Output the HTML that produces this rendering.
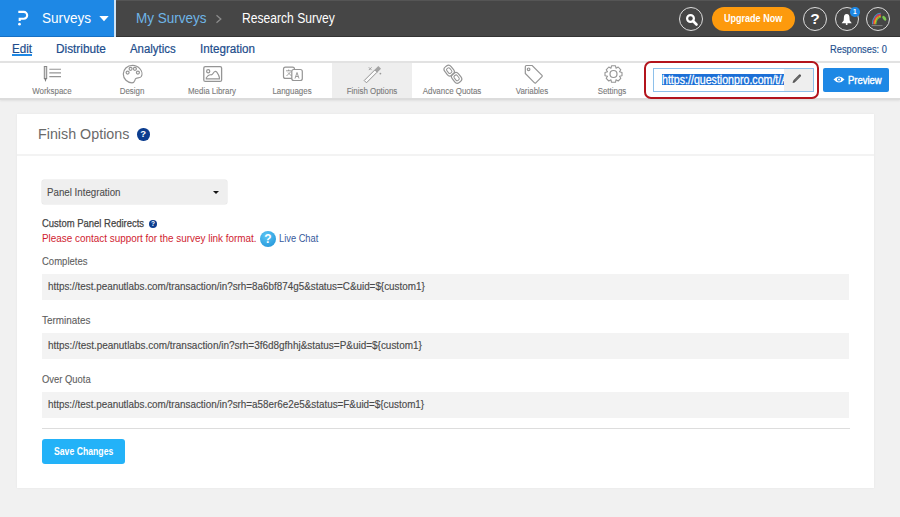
<!DOCTYPE html>
<html><head><meta charset="utf-8">
<style>
*{box-sizing:border-box;margin:0;padding:0}
html,body{width:900px;height:517px;overflow:hidden;background:#f1f1f1;font-family:"Liberation Sans",sans-serif;position:relative}
.abs{position:absolute;white-space:nowrap}
#hdr{position:absolute;left:0;top:0;width:900px;height:37px;background:#464646;border-top:1px solid #555;border-bottom:1px solid #333}
#brand{position:absolute;left:0;top:0;width:114px;height:37px;background:#1e88e5;border-bottom:1px solid #1670c4}
#brandsep{position:absolute;left:114px;top:0;width:2px;height:37px;background:#cfe3f5}
#nav{position:absolute;left:0;top:37px;width:900px;height:25px;background:#fff}
#tb{position:absolute;left:0;top:61px;width:900px;height:39px;background:#fff;border-top:2px solid #e2e2e2;border-bottom:2px solid #dcdcdc;box-shadow:0 1px 2px rgba(0,0,0,0.07)}
.ti{position:absolute;top:0;width:80px;height:35px;text-align:center}
.ti.act{background:#eeeeee}
.ti span{position:absolute;left:0;right:0;top:23px;font-size:8.3px;color:#7a7a7a;text-align:center;transform:scaleX(0.955);-webkit-text-stroke:0.1px #7a7a7a}
.ti svg{position:absolute;left:30px;top:3px}
#card{position:absolute;left:17px;top:114px;width:857px;height:374px;background:#fff;box-shadow:0 0 2px rgba(0,0,0,0.06)}
.lbl{position:absolute;left:42px;font-size:11px;color:#5e5e5e;white-space:nowrap;-webkit-text-stroke:0.1px #5e5e5e}
.sx{transform-origin:0 0}
.nv{top:42px;font-size:12px;color:#214d8c;-webkit-text-stroke:0.2px #214d8c}
.fld{position:absolute;left:42px;width:807px;height:26px;background:#f3f3f3}
.fld span{position:absolute;left:6px;top:6px;font-size:11px;color:#4a4a4a;white-space:nowrap;-webkit-text-stroke:0.15px #4a4a4a}
</style></head><body>
<div id="hdr"></div>
<div id="brand"></div>
<div id="brandsep"></div>
<!-- P logo -->
<svg class="abs" style="left:12px;top:6px" width="24" height="24" viewBox="12 6 24 24">
 <path d="M18.3 11.9 H23.8 A3.4 3.4 0 0 1 23.8 18.7 H19.7 V21" fill="none" stroke="#fff" stroke-width="2.1"/>
 <circle cx="19.5" cy="24.2" r="1.35" fill="#fff"/>
</svg>
<div class="abs" style="left:42px;top:10px;font-size:14px;color:#fff;transform-origin:0 0;transform:scaleX(0.97)">Surveys</div>
<svg class="abs" style="left:99px;top:16px" width="10" height="6"><path d="M0.3 0H9.7L5 5.3Z" fill="#fff"/></svg>
<div class="abs" style="left:136px;top:10px;font-size:14px;color:#6eb5e6;transform-origin:0 0;transform:scaleX(0.965)">My Surveys</div>
<svg class="abs" style="left:215px;top:14px" width="8" height="10"><path d="M1.5 1.3L5.8 5L1.5 8.7" fill="none" stroke="#8c8c8c" stroke-width="1.3"/></svg>
<div class="abs" style="left:242px;top:10px;font-size:14px;color:#fff;transform-origin:0 0;transform:scaleX(0.865)">Research Survey</div>

<!-- header right icons -->
<div class="abs" style="left:679px;top:7px;width:24px;height:24px;border:1.5px solid #ddd;border-radius:50%"></div>
<svg class="abs" style="left:685px;top:12.5px" width="14" height="14" viewBox="0 0 14 14"><circle cx="5.5" cy="5.5" r="3.4" fill="none" stroke="#fff" stroke-width="2.2"/><path d="M8 8L11.5 11.5" stroke="#fff" stroke-width="2.6" stroke-linecap="round"/></svg>
<div class="abs" style="left:712px;top:7px;width:83px;height:24px;background:#fd9a0d;border-radius:12px"></div>
<div class="abs" style="left:724px;top:12px;font-size:10.5px;font-weight:bold;color:#fff;transform-origin:0 0;transform:scaleX(0.86)">Upgrade Now</div>
<div class="abs" style="left:803px;top:7px;width:24px;height:24px;border:1.5px solid #ddd;border-radius:50%"></div>
<div class="abs" style="left:803px;top:10px;width:24px;text-align:center;font-size:15.5px;font-weight:bold;color:#fff">?</div>
<div class="abs" style="left:835px;top:7px;width:24px;height:24px;border:1.5px solid #ddd;border-radius:50%"></div>
<svg class="abs" style="left:836px;top:8px" width="22" height="22" viewBox="836 8 22 22"><path d="M846.7 14 C844.6 14 843.9 15.8 843.9 17.6 L843.7 20.6 L841.6 23.3 H851.8 L849.7 20.6 L849.5 17.6 C849.5 15.8 848.8 14 846.7 14Z" fill="#fff"/><circle cx="846.7" cy="23.9" r="1" fill="#fff"/></svg>
<div class="abs" style="left:850px;top:7px;width:9.5px;height:9.5px;background:#1e88e5;border-radius:50%;color:#fff;font-size:6.5px;font-weight:bold;text-align:center;line-height:9.5px">1</div>
<div class="abs" style="left:866px;top:7px;width:24px;height:24px;border:1.5px solid #ddd;border-radius:50%"></div>
<svg class="abs" style="left:864px;top:5px" width="28" height="28" viewBox="864 5 28 28"><path d="M872.50 24.2 A8.30 11.00 0 0 1 880.8 13.20" fill="none" stroke="#3f9fc0" stroke-width="1.15"/><path d="M873.35 24.2 A7.45 10.00 0 0 1 880.8 14.20" fill="none" stroke="#b8387a" stroke-width="1.15"/><path d="M874.20 24.2 A6.60 9.00 0 0 1 880.8 15.20" fill="none" stroke="#f0602a" stroke-width="1.15"/><path d="M875.05 24.2 A5.75 8.00 0 0 1 880.8 16.20" fill="none" stroke="#f0b020" stroke-width="1.15"/><path d="M875.90 24.2 A4.90 7.00 0 0 1 880.8 17.20" fill="none" stroke="#6cc040" stroke-width="1.15"/>
 <ellipse cx="884.3" cy="18.2" rx="1.5" ry="2.8" transform="rotate(-35 884.3 18.2)" fill="#7cc850"/>
 <path d="M871.5 25.6H882.5" stroke="#8a8a8a" stroke-width="0.9"/>
</svg>

<!-- nav -->
<div id="nav"></div>
<div class="abs sx nv" style="left:12px;transform:scaleX(0.97)">Edit</div>
<div class="abs" style="left:12px;top:54px;width:20px;height:2px;background:#1e88e5"></div>
<div class="abs sx nv" style="left:56px;transform:scaleX(0.985)">Distribute</div>
<div class="abs sx nv" style="left:130px;transform:scaleX(0.95)">Analytics</div>
<div class="abs sx nv" style="left:200px;transform:scaleX(0.97)">Integration</div>
<div class="abs sx" style="left:830px;top:44px;font-size:10px;color:#24508f;transform:scaleX(0.93);-webkit-text-stroke:0.15px #24508f">Responses: 0</div>

<!-- toolbar -->
<div id="tb">
 <div class="ti" style="left:12px"><span>Workspace</span></div>
 <div class="ti" style="left:92px"><span>Design</span></div>
 <div class="ti" style="left:172px"><span>Media Library</span></div>
 <div class="ti" style="left:252px"><span>Languages</span></div>
 <div class="ti act" style="left:332px"><span>Finish Options</span></div>
 <div class="ti" style="left:412px"><span>Advance Quotas</span></div>
 <div class="ti" style="left:492px"><span>Variables</span></div>
 <div class="ti" style="left:572px"><span>Settings</span></div>
</div>
<svg class="abs" style="left:0;top:0" width="900" height="100" viewBox="0 0 900 100">
 <g fill="none" stroke="#959595" stroke-width="1.2">
  <!-- workspace -->
  <rect x="44.3" y="66.5" width="2.4" height="12" fill="#ddd" stroke="#888" stroke-width="1"/>
  <path d="M44.3 78.5 L45.5 82 L46.7 78.5Z" fill="#777" stroke="none"/>
  <path d="M49.3 69.3H61M49.3 72.9H61M49.3 76.6H61" stroke-width="1.1"/>
  <!-- design palette -->
  <path d="M132.5 65.3 C127 65.3 123.3 69.5 123.3 74 C123.3 79 127.5 82.8 132 82.8 C135 82.8 134.5 80.5 135.5 78.8 C136.5 77.3 140 78.3 141.3 76.5 C142.5 74.5 142 71 140 68.8 C138 66.5 135.5 65.3 132.5 65.3Z"/>
  <circle cx="127.6" cy="72.6" r="1.5"/><circle cx="130.6" cy="68.8" r="1.5"/><circle cx="134.9" cy="68.8" r="1.5"/><circle cx="137.9" cy="72.6" r="1.5"/>
  <!-- media library -->
  <rect x="203.8" y="66.6" width="17.8" height="14.8" rx="1.5" stroke-width="1.3"/>
  <circle cx="208.2" cy="71.2" r="1.6"/>
  <path d="M206.3 78.8 L206.3 77.8 Q208.5 74.5 210.5 74.8 Q212 75.2 213 73.5 Q215 70 216.8 72.2 Q218.8 75 219.4 77.5 L219.4 78.8 Z" stroke-width="1.15"/>
  <!-- languages -->
  <rect x="283.5" y="67.2" width="11" height="11.2" rx="2"/>
  <rect x="291.8" y="69.5" width="10.5" height="11" rx="2" fill="#fff"/>
  <path d="M286 70.8H291.5M288.7 69.5V71M286.5 76L291 71.5M288 72.5L291.5 76" stroke-width="0.9"/>
  <path d="M295 78.5L297 72.5L299 78.5M295.8 76.5H298.3" stroke-width="0.9"/>
  <!-- finish wand -->
  <g transform="translate(371.2 75.8) rotate(-45)"><rect x="-8.3" y="-1.6" width="15" height="3.2" fill="#fafafa" stroke="#8f8f8f" stroke-width="0.9"/><rect x="6.7" y="-1.9" width="5.3" height="3.8" fill="#a3a3a3" stroke="none"/></g>
  <path d="M368.8 67.3L371.6 70.1M371.6 67.3L368.8 70.1" stroke="#999" stroke-width="0.9"/>
  <circle cx="380.4" cy="73.6" r="0.9" fill="#999" stroke="none"/>
  <!-- quotas chain -->
  <g transform="translate(449.2 70.6) rotate(-38)"><rect x="-4" y="-5.3" width="8" height="10.6" rx="3.3" stroke-width="1.2"/><rect x="-1.9" y="-2.9" width="3.8" height="5.8" rx="1.5" stroke-width="1"/></g>
  <g transform="translate(456.6 77.8) rotate(-38)"><rect x="-4" y="-5.3" width="8" height="10.6" rx="3.3" stroke-width="1.2"/><rect x="-1.9" y="-2.9" width="3.8" height="5.8" rx="1.5" stroke-width="1"/></g>
  <!-- variables tag -->
  <path d="M525.3 66.7 Q525.3 65.5 526.5 65.5 L532.2 65.5 L542 75.3 Q542.6 76 542 76.6 L535.8 82.8 Q535.2 83.4 534.5 82.8 L525.3 73.5 Z" stroke-width="1.2"/>
  <circle cx="528.6" cy="69.3" r="1.3"/>
  <!-- settings gear -->
  <path d="M611.5 65.8 L615.5 65.8 L616 68.2 L618.2 67 L620.8 69.8 L619.5 71.8 L622 72.5 L622 75.7 L619.5 76.3 L620.8 78.3 L618.2 81 L616 79.8 L615.5 82.3 L611.5 82.3 L611 79.8 L608.8 81 L606.2 78.3 L607.5 76.3 L605 75.7 L605 72.5 L607.5 71.8 L606.2 69.8 L608.8 67 L611 68.2 Z" stroke-width="1.1" stroke-linejoin="round"/>
  <circle cx="613.5" cy="74" r="3.5" stroke-width="1.2"/>
 </g>
</svg>

<!-- url box -->
<div class="abs" style="left:644px;top:61px;width:175px;height:38px;border:2px solid #b3141c;border-radius:7px;background:#fff"></div>
<div class="abs" style="left:653px;top:68px;width:161px;height:24px;border:1px solid #8ec0ea;background:#fff"></div>
<div class="abs" style="left:784px;top:69px;width:29px;height:22px;background:#eeeeee"></div>
<div class="abs" style="left:662px;top:74px;width:122px;height:11px;background:#1c6fd6"></div>
<div class="abs" style="left:662px;top:73px;width:122px;height:13px;overflow:hidden"><div style="font-size:12px;color:#fff;transform-origin:0 0;transform:scaleX(0.885);white-space:nowrap;-webkit-text-stroke:0.3px #fff">https://questionpro.com/t/A</div></div>
<svg class="abs" style="left:788px;top:70px" width="18" height="18" viewBox="788 70 18 18"><path d="M794.6 80.9L799.8 75.7" stroke="#555" stroke-width="2.5" stroke-linecap="round"/><path d="M792.6 83L793.2 80.6L795 82.4Z" fill="#555"/><path d="M795 80.5L799.3 76.2" stroke="#9a9a9a" stroke-width="0.6"/></svg>
<div class="abs" style="left:823px;top:68px;width:66px;height:24px;background:#1e88e5;border-radius:2px"></div>
<svg class="abs" style="left:833px;top:75px" width="12" height="9" viewBox="0 0 12 9"><path d="M0.5 4.5Q6 -1.5 11.5 4.5Q6 10.5 0.5 4.5Z" fill="#fff"/><circle cx="6" cy="4.5" r="2" fill="#1e88e5"/><circle cx="6" cy="4.5" r="1" fill="#fff"/></svg>
<div class="abs" style="left:848px;top:73.5px;font-size:10.5px;color:#fff;transform-origin:0 0;transform:scaleX(0.9);-webkit-text-stroke:0.4px #fff">Preview</div>

<!-- card -->
<div id="card"></div>
<div class="abs" style="left:38px;top:126px;font-size:14.3px;color:#6a6a6a">Finish Options</div>
<div class="abs" style="left:137px;top:128px;width:12.5px;height:12.5px;border-radius:50%;background:#0c3d8f;color:#fff;font-size:9.5px;font-weight:bold;text-align:center;line-height:12.5px">?</div>
<div class="abs" style="left:17px;top:154px;width:857px;height:2px;background:#f3f3f3"></div>

<div class="abs" style="left:42px;top:180px;width:185px;height:24px;background:#efefef;border-radius:2px;box-shadow:0 0 0 0.5px #e6e6e6"></div>
<div class="abs sx" style="left:47px;top:186px;font-size:10.5px;color:#4d4d4d;transform:scaleX(0.926);-webkit-text-stroke:0.1px #4d4d4d">Panel Integration</div>
<svg class="abs" style="left:213px;top:191px" width="6" height="3"><path d="M0 0H6L3 3Z" fill="#151515"/></svg>

<div class="abs sx" style="left:42px;top:217px;font-size:11px;color:#444;transform:scaleX(0.86);-webkit-text-stroke:0.25px #444">Custom Panel Redirects</div>
<div class="abs" style="left:149px;top:219.5px;width:8px;height:8px;border-radius:50%;background:#0c3d8f;color:#fff;font-size:6.5px;font-weight:bold;text-align:center;line-height:8px">?</div>
<div class="abs sx" style="left:42px;top:232px;font-size:11px;color:#d01c30;transform:scaleX(0.90)">Please contact support for the survey link format.</div>
<div class="abs" style="left:260px;top:231px;width:16px;height:16px;border-radius:50%;background:radial-gradient(circle at 40% 30%,#5cc6f5,#1b8fd6);color:#fff;font-size:12px;font-weight:bold;text-align:center;line-height:16px">?</div>
<div class="abs sx" style="left:279px;top:233px;font-size:10px;color:#36599b;transform:scaleX(0.93)">Live Chat</div>

<div class="lbl sx" style="top:255px;transform:scaleX(0.865)">Completes</div>
<div class="fld" style="top:274px"><span class="sx" style="transform:scaleX(0.896)">https://test.peanutlabs.com/transaction/in?srh=8a6bf874g5&amp;status=C&amp;uid=${custom1}</span></div>
<div class="lbl sx" style="top:314px;transform:scaleX(0.9)">Terminates</div>
<div class="fld" style="top:333px"><span class="sx" style="transform:scaleX(0.905)">https://test.peanutlabs.com/transaction/in?srh=3f6d8gfhhj&amp;status=P&amp;uid=${custom1}</span></div>
<div class="lbl sx" style="top:373px;transform:scaleX(0.856)">Over Quota</div>
<div class="fld" style="top:392px"><span class="sx" style="transform:scaleX(0.896)">https://test.peanutlabs.com/transaction/in?srh=a58er6e2e5&amp;status=F&amp;uid=${custom1}</span></div>
<div class="abs" style="left:42px;top:428px;width:808px;height:1px;background:#dddddd"></div>

<div class="abs" style="left:42px;top:439px;width:83px;height:25px;background:#23b2f8;border-radius:3px"></div>
<div class="abs sx" style="left:54px;top:445px;font-size:10.5px;font-weight:bold;color:#fff;transform:scaleX(0.826)">Save Changes</div>
</body></html>
